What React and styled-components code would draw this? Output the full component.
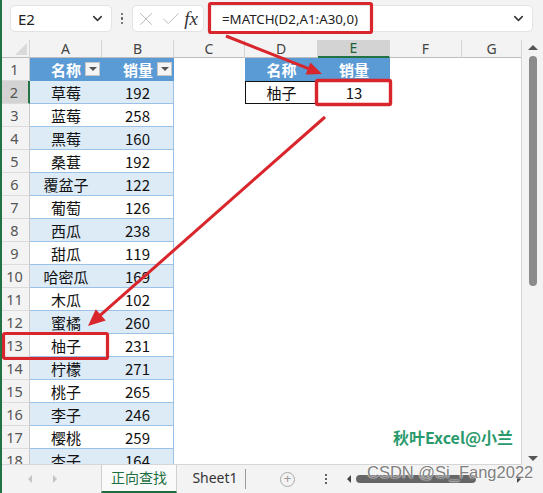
import React from "react";
import styled, { createGlobalStyle } from "styled-components";
import { ChevronDown, X, Check } from "lucide-react";

const Global = createGlobalStyle`
  html, body { margin: 0; padding: 0; background: #fff; }
  body { font-family: "Noto Sans", "Noto Sans CJK SC", sans-serif; }
`;

const CJK = `"Noto Sans CJK SC", "Noto Sans", sans-serif`;
const COLS = "28px 72px 72px 71px 73px 72px 72px 60px";
const RED = "#d8262c";

const Page = styled.div`
  position: relative;
  width: 541px;
  height: 493px;
  overflow: hidden;
  background: #f3f3f3;
  border-left: 2px solid #217346;
  display: flex;
  flex-direction: column;
`;

const FormulaBar = styled.div`
  height: 40px;
  box-sizing: border-box;
  padding: 5px 0 0 8px;
  display: flex;
  align-items: flex-start;
  flex: none;
`;

const Field = styled.div`
  height: 27px;
  box-sizing: border-box;
  background: #fff;
  border: 1px solid #e3e3e3;
  border-radius: 5px;
  display: flex;
  align-items: center;
  color: #222;
  font-size: 14.5px;
`;

const NameBox = styled(Field)`
  width: 102px;
  padding: 0 6px 0 7px;
  justify-content: space-between;
  font-size: 15px;
`;

const Dots = styled.div`
  width: 20px;
  height: 27px;
  display: flex;
  flex-direction: column;
  align-items: center;
  justify-content: center;
  gap: 2px;
  span { width: 2.5px; height: 2.5px; border-radius: 50%; background: #555; }
`;

const FxBox = styled(Field)`
  width: 72px;
  padding: 0 3px 0 2px;
  justify-content: space-between;
`;

const Fx = styled.span`
  font-family: "Liberation Serif", serif;
  font-style: italic;
  font-size: 19px;
  color: #333;
  padding-right: 2px;
`;

const FormulaInput = styled(Field)`
  width: 325px;
  margin-left: 4px;
  padding: 0 6px 0 13px;
  justify-content: space-between;
  font-size: 13.3px;
`;

const Main = styled.div`
  height: 425px;
  display: flex;
  flex: none;
`;

const Sheet = styled.div`
  width: 520px;
  height: 425px;
  overflow: hidden;
  background: #fff;
  border-right: 1px solid #d6d6d6;
  border-bottom: 1px solid #d6d6d6;
  box-sizing: border-box;
`;

const Row = styled.div`
  display: grid;
  grid-template-columns: ${COLS};
  height: ${(p) => (p.$head ? "18px" : "23px")};
`;

const ColHead = styled.div`
  background: ${(p) => (p.$active ? "#d3d3d3" : "#f3f3f3")};
  border-right: 1px solid #d4d4d4;
  border-bottom: ${(p) => (p.$active ? "2px solid #217346" : "1px solid #bdbdbd")};
  box-sizing: border-box;
  display: flex;
  align-items: center;
  justify-content: center;
  font-size: 14px;
  color: ${(p) => (p.$active ? "#1c5e38" : "#444")};
  line-height: 1;
`;

const Corner = styled(ColHead)`
  position: relative;
  &::after {
    content: "";
    position: absolute;
    right: 2px;
    bottom: 2px;
    border-left: 12px solid transparent;
    border-bottom: 12px solid #d9d9d9;
  }
`;

const RowHead = styled.div`
  background: ${(p) => (p.$active ? "#d3d3d3" : "#f3f3f3")};
  border-right: ${(p) => (p.$active ? "2px solid #217346" : "1px solid #c9c9c9")};
  border-bottom: 1px solid #dcdcdc;
  box-sizing: border-box;
  display: flex;
  align-items: center;
  justify-content: center;
  font-size: 14.5px;
  color: #555;
  padding-right: 2px;
`;

const Cell = styled.div`
  box-sizing: border-box;
  display: flex;
  align-items: center;
  justify-content: center;
  font-family: ${CJK};
  font-size: 15px;
  color: #111;
  background: ${(p) =>
    p.$kind === "head" ? "#5b9bd5" : p.$kind === "stripe" ? "#ddebf7" : "#fff"};
  border-bottom: ${(p) =>
    p.$kind === "head" ? "1px solid #5b9bd5" : p.$kind ? "1px solid #9bc2e6" : "none"};
  border-right: ${(p) => (p.$right ? "1px solid #9bc2e6" : "none")};
  border: ${(p) => (p.$boxed ? "1px solid #111" : undefined)};
`;

const HeadCell = styled(Cell)`
  display: grid;
  grid-template-columns: 1fr auto 1fr;
  color: #fff;
  font-weight: 700;
  span { grid-column: 2; }
`;

const FilterBtn = styled.div`
  grid-column: 3;
  justify-self: end;
  margin-right: 2px;
  width: 15px;
  height: 14px;
  box-sizing: border-box;
  background: #f4f4f4;
  border: 1px solid #c6c6c6;
  display: flex;
  align-items: center;
  justify-content: center;
  &::after {
    content: "";
    border-left: 4px solid transparent;
    border-right: 4px solid transparent;
    border-top: 4px solid #555;
  }
`;

const VScroll = styled.div`
  width: 21px;
  display: flex;
  flex-direction: column;
  align-items: center;
  padding-top: 5px;
  box-sizing: border-box;
`;

const Tri = styled.div`
  width: 0;
  height: 0;
  border-left: ${(p) => (p.$dir === "left" ? "none" : p.$dir === "right" ? `${p.$s}px solid ${p.$c}` : `${p.$s}px solid transparent`)};
  border-right: ${(p) => (p.$dir === "right" ? "none" : p.$dir === "left" ? `${p.$s}px solid ${p.$c}` : `${p.$s}px solid transparent`)};
  border-top: ${(p) => (p.$dir === "up" ? "none" : p.$dir === "down" ? `${p.$s}px solid ${p.$c}` : `${p.$s}px solid transparent`)};
  border-bottom: ${(p) => (p.$dir === "down" ? "none" : p.$dir === "up" ? `${p.$s}px solid ${p.$c}` : `${p.$s}px solid transparent`)};
`;

const VThumb = styled.div`
  width: 8px;
  height: 230px;
  margin-top: 6px;
  border-radius: 4px;
  background: #8b8b8b;
`;

const VBottom = styled.div`
  margin-top: auto;
  margin-bottom: 4px;
`;

const TabBar = styled.div`
  height: 28px;
  flex: none;
  display: flex;
  align-items: stretch;
`;

const Nav = styled.div`
  width: 99px;
  display: flex;
  align-items: center;
  padding-left: 26px;
  gap: 21px;
  box-sizing: border-box;
`;

const Tab = styled.div`
  width: ${(p) => p.$w}px;
  box-sizing: border-box;
  display: flex;
  align-items: center;
  justify-content: center;
  font-family: ${(p) => (p.$active ? CJK : `"Noto Sans", sans-serif`)};
  font-size: 14px;
  color: ${(p) => (p.$active ? "#1d6f42" : "#333")};
  background: ${(p) => (p.$active ? "#fafafa" : "transparent")};
  border-left: ${(p) => (p.$active ? "1px solid #d0d0d0" : "none")};
  border-right: ${(p) => (p.$active ? "1px solid #d0d0d0" : "none")};
  border-bottom: ${(p) => (p.$active ? "2px solid #1d6f42" : "2px solid transparent")};
  padding-bottom: 2px;
  padding-left: ${(p) => (p.$active ? "0" : "8px")};
`;

const Sep = styled.div`
  width: 1px;
  height: 20px;
  align-self: center;
  background: #9a9a9a;
`;

const Plus = styled.div`
  margin-left: 34px;
  align-self: center;
  width: 13px;
  height: 13px;
  border: 1.3px solid #aaa;
  border-radius: 50%;
  color: #999;
  font-size: 13px;
  line-height: 12px;
  text-align: center;
  font-family: "Liberation Sans", sans-serif;
`;

const TabDots = styled(Dots)`
  height: 28px;
  width: 8px;
  margin-left: 27px;
  span { background: #333; width: 2px; height: 2px; }
`;

const HScroll = styled.div`
  margin-left: 17px;
  flex: 1;
  display: flex;
  align-items: center;
  gap: 5px;
  padding-right: 22px;
`;

const HThumb = styled.div`
  width: 120px;
  height: 8px;
  border-radius: 4px;
  background: #666;
`;

const HRight = styled.div`
  margin-left: auto;
`;

const Overlay = styled.svg`
  position: absolute;
  left: -2px;
  top: 0;
  pointer-events: none;
`;

const Brand = styled.div`
  position: absolute;
  left: 391px;
  top: 425px;
  font-family: ${CJK};
  font-weight: 700;
  font-size: 16px;
  color: #2a9a6c;
`;

const Watermark = styled.div`
  position: absolute;
  left: 365px;
  top: 463px;
  font-family: "Liberation Sans", sans-serif;
  font-size: 16.5px;
  color: rgba(110, 110, 110, 0.9);
  text-shadow: 0 0 1px #fff, 0 0 2px #fff;
  white-space: nowrap;
`;

const fruits = [
  ["草莓", 192], ["蓝莓", 258], ["黑莓", 160], ["桑葚", 192], ["覆盆子", 122],
  ["葡萄", 126], ["西瓜", 238], ["甜瓜", 119], ["哈密瓜", 169], ["木瓜", 102],
  ["蜜橘", 260], ["柚子", 231], ["柠檬", 271], ["桃子", 265], ["李子", 246],
  ["樱桃", 259], ["杏子", 164],
];

const letters = ["A", "B", "C", "D", "E", "F", "G"];

function Arrow({ x1, y1, x2, y2, len, half }) {
  const dx = x2 - x1, dy = y2 - y1;
  const n = Math.hypot(dx, dy);
  const ux = dx / n, uy = dy / n;
  const bx = x2 - ux * len, by = y2 - uy * len;
  const px = -uy, py = ux;
  const pts = `${x2},${y2} ${bx + px * half},${by + py * half} ${bx - px * half},${by - py * half}`;
  return (
    <g>
      <line x1={x1} y1={y1} x2={bx + ux * 2} y2={by + uy * 2} stroke={RED} strokeWidth="3" />
      <polygon points={pts} fill={RED} />
    </g>
  );
}

export default function App() {
  return (
    <>
      <Global />
      <Page>
        <FormulaBar>
          <NameBox>
            <span>E2</span>
            <ChevronDown size={15} strokeWidth={2.4} color="#333" />
          </NameBox>
          <Dots><span /><span /><span /></Dots>
          <FxBox>
            <X size={22} strokeWidth={1} color="#b5b5b5" />
            <Check size={22} strokeWidth={1} color="#b5b5b5" />
            <Fx>fx</Fx>
          </FxBox>
          <FormulaInput>
            <span>=MATCH(D2,A1:A30,0)</span>
            <ChevronDown size={15} strokeWidth={2.4} color="#333" />
          </FormulaInput>
        </FormulaBar>

        <Main>
          <Sheet>
            <Row $head>
              <Corner />
              {letters.map((l) => (
                <ColHead key={l} $active={l === "E"}>{l}</ColHead>
              ))}
            </Row>
            <Row>
              <RowHead>1</RowHead>
              <HeadCell $kind="head"><span>名称</span><FilterBtn /></HeadCell>
              <HeadCell $kind="head"><span>销量</span><FilterBtn /></HeadCell>
              <Cell />
              <HeadCell $kind="head"><span>名称</span></HeadCell>
              <HeadCell $kind="head"><span>销量</span></HeadCell>
              <Cell />
              <Cell />
            </Row>
            {fruits.map(([name, qty], i) => {
              const r = i + 2;
              const kind = r % 2 === 0 ? "stripe" : "plain";
              return (
                <Row key={r}>
                  <RowHead $active={r === 2}>{r}</RowHead>
                  <Cell $kind={kind}>{name}</Cell>
                  <Cell $kind={kind} $right>{qty}</Cell>
                  <Cell />
                  {r === 2 ? <Cell $boxed>柚子</Cell> : <Cell />}
                  {r === 2 ? <Cell>13</Cell> : <Cell />}
                  <Cell />
                  <Cell />
                </Row>
              );
            })}
          </Sheet>
          <VScroll>
            <Tri $dir="up" $s={5} $c="#555" />
            <VThumb />
            <VBottom><Tri $dir="down" $s={5} $c="#555" /></VBottom>
          </VScroll>
        </Main>

        <TabBar>
          <Nav>
            <Tri $dir="left" $s={4} $c="#c4c4c4" />
            <Tri $dir="right" $s={4} $c="#c4c4c4" />
          </Nav>
          <Tab $active $w={76}>正向查找</Tab>
          <Tab $w={68}>Sheet1</Tab>
          <Sep />
          <Plus>+</Plus>
          <TabDots><span /><span /><span /></TabDots>
          <HScroll>
            <Tri $dir="left" $s={4} $c="#444" />
            <HThumb />
            <HRight><Tri $dir="right" $s={4} $c="#444" /></HRight>
          </HScroll>
        </TabBar>

        <Overlay width="543" height="493" viewBox="0 0 543 493">
          <rect x="209.5" y="3.5" width="162" height="29" rx="1.5" fill="none" stroke={RED} strokeWidth="3.2" />
          <rect x="316.5" y="80.5" width="74" height="24" rx="1.5" fill="none" stroke={RED} strokeWidth="3.4" />
          <rect x="3.5" y="333.5" width="104" height="25" rx="1.5" fill="none" stroke={RED} strokeWidth="3.2" />
          <Arrow x1={226} y1={36} x2={322} y2={74} len={15} half={6.5} />
          <Arrow x1={325} y1={117} x2={88} y2={326} len={17} half={7.5} />
        </Overlay>
        <Brand>秋叶Excel@小兰</Brand>
        <Watermark>CSDN @Si_Fang2022</Watermark>
      </Page>
    </>
  );
}
